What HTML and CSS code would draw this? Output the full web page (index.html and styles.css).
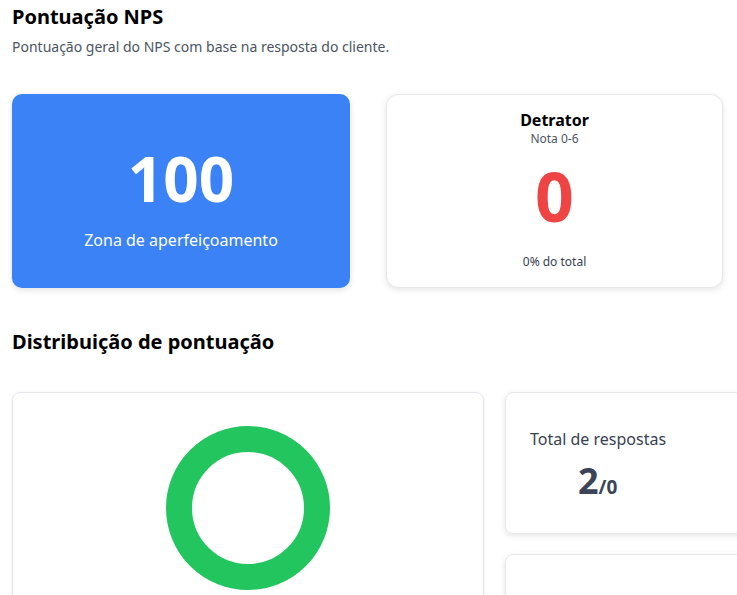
FILE: index.html
```html
<!DOCTYPE html>
<html lang="pt">
<head>
<meta charset="utf-8">
<title>Pontuação NPS</title>
<link rel="stylesheet" href="styles.css">
</head>
<body>
<main class="page">
  <header class="head">
    <h1 class="title">Pontuação NPS</h1>
    <p class="subtitle">Pontuação geral do NPS com base na resposta do cliente.</p>
  </header>

  <section class="score-row">
    <div class="score-card">
      <div class="score-value">100</div>
      <div class="score-label">Zona de aperfeiçoamento</div>
    </div>
    <div class="cat-card">
      <div class="cat-name">Detrator</div>
      <div class="cat-range">Nota 0-6</div>
      <div class="cat-value">0</div>
      <div class="cat-pct">0% do total</div>
    </div>
  </section>

  <h2 class="section-title">Distribuição de pontuação</h2>

  <section class="dist-row">
    <div class="chart-card">
      <svg class="donut" width="164" height="164" viewBox="0 0 164 164">
        <circle cx="82" cy="82" r="69" fill="none" stroke="#22c55e" stroke-width="26"/>
      </svg>
    </div>
    <div class="side-col">
      <div class="stat-card">
        <div class="stat-label">Total de respostas</div>
        <div class="stat-value"><span class="stat-big">2</span><span class="stat-small">/0</span></div>
      </div>
      <div class="stat-card stat-empty"></div>
    </div>
  </section>
</main>
</body>
</html>
```

FILE: styles.css
```css
* { box-sizing: border-box; }
html, body { margin: 0; padding: 0; background: #fff; overflow: hidden; }
body { font-family: "Noto Sans", "Open Sans", sans-serif; color: #000; }

.page { padding: 0 12px; width: 900px; }

.head { padding-top: 3px; }
.title { margin: 0; font-size: 20px; font-weight: 700; line-height: 28px; color: #000; }
.subtitle { margin: 6px 0 0; font-size: 14px; line-height: 20px; color: #4b5563; }

.score-row { display: flex; gap: 36px; margin-top: 37px; width: 711px; }

.score-card {
  width: 338px; height: 194px;
  background: #3b82f6; border-radius: 10px;
  box-shadow: 0 2px 6px rgba(0,0,0,0.12);
  display: flex; flex-direction: column; align-items: center;
  color: #fff;
  padding-top: 44px;
}
.score-value { font-size: 62px; font-weight: 700; line-height: 80px; }
.score-label { margin-top: 11px; font-size: 16px; line-height: 22px; }

.cat-card {
  width: 337px; height: 194px;
  background: #fff; border: 1px solid #e5e7eb; border-radius: 12px;
  box-shadow: 0 2px 6px rgba(0,0,0,0.1);
  display: flex; flex-direction: column; align-items: center;
  padding-top: 14px;
}
.cat-name { font-size: 16px; font-weight: 700; line-height: 22px; }
.cat-range { font-size: 12px; line-height: 16px; color: #4b5563; }
.cat-value { margin-top: 7px; font-size: 68px; font-weight: 700; line-height: 84px; color: #ef4444; }
.cat-pct { margin-top: 16px; font-size: 12px; line-height: 16px; color: #374151; }

.section-title { margin: 40px 0 0; font-size: 20px; font-weight: 700; line-height: 28px; }

.dist-row { display: flex; gap: 21px; margin-top: 36px; }

.chart-card {
  width: 472px; height: 260px;
  border: 1px solid #e5e7eb; border-radius: 8px;
  box-shadow: 0 1px 4px rgba(0,0,0,0.06);
  display: flex; justify-content: center; align-items: flex-start;
  padding-top: 33px;
}
.donut { display: block; }

.side-col { display: flex; flex-direction: column; gap: 20px; }

.stat-card {
  width: 260px; height: 142px;
  border: 1px solid #e5e7eb; border-radius: 8px;
  box-shadow: 0 2px 6px rgba(0,0,0,0.1);
  padding: 35px 24px 0;
}
.stat-empty { height: 80px; }
.stat-label { font-size: 16px; line-height: 22px; color: #374151; }
.stat-value { margin-top: 9px; padding-left: 48px; color: #3b4557; font-weight: 700; }
.stat-big { font-size: 36px; line-height: 44px; }
.stat-small { font-size: 19px; }
```
